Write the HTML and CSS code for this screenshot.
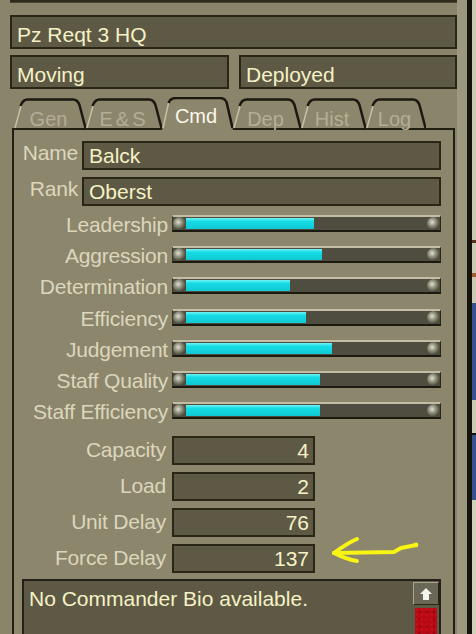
FILE: index.html
```html
<!DOCTYPE html>
<html>
<head>
<meta charset="utf-8">
<title>Unit Info</title>
<link rel="stylesheet" href="styles.css">
</head>
<body>
<div class="screen">
  <div class="app">
    <div class="stub"></div>
    <div class="field title">Pz Reqt 3 HQ</div>
    <div class="status-row">
      <div class="field status">Moving</div>
      <div class="field status status-b">Deployed</div>
    </div>

    <div class="tabs">
      <div class="tab w-gen">
        <svg width="72" height="33" viewBox="0 0 72 33"><path class="t-fill" d="M0 31 L6 9 Q8 3 14 3 L59 3 Q63 3 65 8 L72 31Z"/><path class="t-light" d="M1 31 L7 9"/><path class="t-dark" d="M6.5 9 Q8.5 2.5 14 2.5 L59 2.5 Q63.5 2.5 65.5 8 L71.5 31"/></svg>
        <span>Gen</span>
      </div>
      <div class="tab w-es">
        <svg width="76" height="33" viewBox="0 0 76 33"><path class="t-fill" d="M0 31 L6 9 Q8 3 14 3 L63 3 Q67 3 69 8 L76 31Z"/><path class="t-light" d="M1 31 L7 9"/><path class="t-dark" d="M6.5 9 Q8.5 2.5 14 2.5 L63 2.5 Q67.5 2.5 69.5 8 L75.5 31"/></svg>
        <span class="es">E&amp;S</span>
      </div>
      <div class="tab active w-cmd">
        <svg width="71" height="33" viewBox="0 0 71 33"><path class="t-fill-a" d="M0 33 L6 6 Q8 0.5 14 0.5 L58 0.5 Q62 0.5 64 5 L71 33Z"/><path class="t-light" d="M1 31 L6.5 6"/><path class="t-dark" d="M6.5 6 Q8.5 1 14 1 L58 1 Q62.5 1 64.5 5 L70.5 31"/></svg>
        <span>Cmd</span>
      </div>
      <div class="tab w-dep">
        <svg width="68" height="33" viewBox="0 0 68 33"><path class="t-fill" d="M0 31 L6 9 Q8 3 14 3 L55 3 Q59 3 61 8 L68 31Z"/><path class="t-light" d="M1 31 L7 9"/><path class="t-dark" d="M6.5 9 Q8.5 2.5 14 2.5 L55 2.5 Q59.5 2.5 61.5 8 L67.5 31"/></svg>
        <span>Dep</span>
      </div>
      <div class="tab w-hist">
        <svg width="65" height="33" viewBox="0 0 65 33"><path class="t-fill" d="M0 31 L6 9 Q8 3 14 3 L52 3 Q56 3 58 8 L65 31Z"/><path class="t-light" d="M1 31 L7 9"/><path class="t-dark" d="M6.5 9 Q8.5 2.5 14 2.5 L52 2.5 Q56.5 2.5 58.5 8 L64.5 31"/></svg>
        <span>Hist</span>
      </div>
      <div class="tab w-log">
        <svg width="60" height="33" viewBox="0 0 60 33"><path class="t-fill" d="M0 31 L6 9 Q8 3 14 3 L47 3 Q51 3 53 8 L60 31Z"/><path class="t-light" d="M1 31 L7 9"/><path class="t-dark" d="M6.5 9 Q8.5 2.5 14 2.5 L47 2.5 Q51.5 2.5 53.5 8 L59.5 31"/></svg>
        <span>Log</span>
      </div>
    </div>

    <div class="panel">
      <div class="id-row"><div class="lbl id-lbl">Name</div><div class="field idf">Balck</div></div>
      <div class="id-row"><div class="lbl id-lbl">Rank</div><div class="field idf">Oberst</div></div>

      <div class="sliders">
        <div class="srow"><div class="lbl s-lbl">Leadership</div><div class="slider"><span class="knob"></span><span class="fill" style="width:128px"></span><span class="rest"></span><span class="knob"></span></div></div>
        <div class="srow"><div class="lbl s-lbl">Aggression</div><div class="slider"><span class="knob"></span><span class="fill" style="width:136px"></span><span class="rest"></span><span class="knob"></span></div></div>
        <div class="srow"><div class="lbl s-lbl">Determination</div><div class="slider"><span class="knob"></span><span class="fill" style="width:104px"></span><span class="rest"></span><span class="knob"></span></div></div>
        <div class="srow"><div class="lbl s-lbl">Efficiency</div><div class="slider"><span class="knob"></span><span class="fill" style="width:120px"></span><span class="rest"></span><span class="knob"></span></div></div>
        <div class="srow"><div class="lbl s-lbl">Judgement</div><div class="slider"><span class="knob"></span><span class="fill" style="width:146px"></span><span class="rest"></span><span class="knob"></span></div></div>
        <div class="srow"><div class="lbl s-lbl">Staff Quality</div><div class="slider"><span class="knob"></span><span class="fill" style="width:134px"></span><span class="rest"></span><span class="knob"></span></div></div>
        <div class="srow"><div class="lbl s-lbl">Staff Efficiency</div><div class="slider"><span class="knob"></span><span class="fill" style="width:134px"></span><span class="rest"></span><span class="knob"></span></div></div>
      </div>

      <div class="numbers">
        <div class="nrow"><div class="lbl n-lbl">Capacity</div><div class="field num">4</div></div>
        <div class="nrow"><div class="lbl n-lbl">Load</div><div class="field num">2</div></div>
        <div class="nrow"><div class="lbl n-lbl">Unit Delay</div><div class="field num">76</div></div>
        <div class="nrow"><div class="lbl n-lbl">Force Delay</div><div class="field num">137</div>
          <svg class="arrow" width="92" height="32" viewBox="0 0 92 32">
            <path d="M4 18 C12 12 20 7 27 4"/>
            <path d="M4 18 C12 22 20 25 27 26"/>
            <path d="M4 18 L64 17 L71 13 L86 10"/>
            <circle cx="86" cy="10" r="2.4"/>
          </svg>
        </div>
      </div>

      <div class="bio">
        <div class="bio-text">No Commander Bio available.</div>
        <div class="scroll">
          <div class="up"><svg width="14" height="14" viewBox="0 0 14 14"><path d="M7 1 L13 7 L10 7 L10 13 L4 13 L4 7 L1 7 Z" fill="#f4f4ee"/></svg></div>
          <div class="thumb"></div>
        </div>
      </div>
    </div>
  </div>
  <div class="rim"></div>
  <div class="edge"></div>
  <div class="outside"></div>
</div>
</body>
</html>
```

FILE: styles.css
```css
html, body {
  margin: 0;
  padding: 0;
}
body {
  background: #8a846b;
  font-family: "Liberation Sans", Arial, sans-serif;
}
.screen {
  display: flex;
  width: 476px;
  height: 634px;
  overflow: hidden;
}
.app {
  width: 457px;
  flex: none;
  background: #8a846b;
}
.rim {
  width: 10px;
  flex: none;
  background: #9c977f;
}
.edge {
  width: 5px;
  flex: none;
  background: #15130c;
}
.outside {
  flex: 1;
  background: linear-gradient(to bottom,
    #cacab4 0, #cacab4 240px, #5a3020 240px, #5a3020 243px,
    #cacab4 243px, #cacab4 273px, #a85c2c 273px, #a85c2c 277px,
    #cacab4 277px, #cacab4 303px, #34528c 303px, #34528c 400px,
    #cacab4 400px, #cacab4 433px, #101010 433px, #101010 435px,
    #34528c 435px, #34528c 500px, #d0d0bc 500px);
}
.stub {
  width: 447px;
  height: 2px;
  margin-left: 10px;
  background: #2e2b1d;
  border-bottom: 1px solid #4a4632;
}

/* generic field */
.field {
  box-sizing: border-box;
  border: 2px solid #2a2616;
  background: #5e5945;
  color: #f6f2c6;
  font-size: 21px;
  white-space: nowrap;
  overflow: hidden;
}
.title {
  margin: 12px 0 0 10px;
  width: 447px;
  height: 34px;
  padding: 4px 0 0 5px;
  line-height: 27px;
}
.status-row {
  display: flex;
  gap: 10px;
  margin: 6px 0 0 10px;
  width: 447px;
}
.status {
  flex: none;
  width: 219px;
  height: 34px;
  padding: 4px 0 0 5px;
  line-height: 27px;
}
.status-b {
  width: 218px;
}

/* tabs */
.tabs {
  display: flex;
  height: 33px;
  margin: 8px 0 -2px 14px;
  position: relative;
  z-index: 1;
}
.tab {
  position: relative;
  flex: none;
  height: 33px;
  display: flex;
  align-items: flex-end;
  justify-content: center;
  padding-right: 3px;
  box-sizing: border-box;
}
.tab svg {
  position: absolute;
  left: 0;
  top: 0;
}
.tab span {
  position: relative;
  font-size: 20px;
  line-height: 20px;
  color: #b3ae95;
  padding-bottom: 1px;
}
.tab span.es {
  letter-spacing: 3px;
  padding-left: 3px;
}
.tab.active span {
  color: #fbf8ea;
  padding-bottom: 4px;
}
.w-gen { width: 72px; }
.w-es { width: 76px; }
.w-cmd { width: 71px; }
.w-dep { width: 68px; }
.w-hist { width: 65px; }
.w-log { width: 60px; }
.t-fill { fill: #8c866d; }
.t-fill-a { fill: #8c866d; }
.t-light { fill: none; stroke: #c6c1a6; stroke-width: 1.5; }
.t-dark { fill: none; stroke: #1a1810; stroke-width: 2.5; }

/* panel */
.panel {
  position: relative;
  margin-left: 12px;
  width: 443px;
  height: 506px;
  box-sizing: border-box;
  border: 2px solid #211e14;
  border-bottom: none;
  background: #8c866d;
  padding: 11px 12px 0 0;
}
.lbl {
  color: #dcd6bc;
  font-size: 21px;
  letter-spacing: -0.2px;
  white-space: nowrap;
  text-align: right;
  flex: none;
}
.id-row {
  display: flex;
  gap: 4px;
  height: 29px;
}
.id-row + .id-row {
  margin-top: 7px;
}
.id-lbl {
  width: 64px;
  line-height: 24px;
}
.idf {
  flex: 1;
  line-height: 25px;
  padding-left: 5px;
}

.sliders {
  margin-top: 2px;
}
.srow {
  display: flex;
  align-items: center;
  gap: 4px;
  height: 31.2px;
}
.s-lbl {
  width: 154px;
  padding-top: 2px;
  line-height: 29px;
}
.slider {
  flex: none;
  width: 269px;
  height: 17px;
  box-sizing: border-box;
  border-top: 2px solid #c2bda4;
  border-bottom: 2px solid #1c1a10;
  border-left: 1px solid #3a3728;
  border-right: 1px solid #2a2618;
  background: #4f4c40;
  display: flex;
  align-items: center;
}
.knob {
  flex: none;
  width: 13px;
  height: 13px;
  border-radius: 50%;
  background: radial-gradient(circle at 40% 40%, #e2e2d2 0, #8e8e7c 35%, #3a3a2c 78%);
}
.fill {
  flex: none;
  height: 11px;
  background: linear-gradient(#70f4f4, #16dce5 30%, #10c8d4);
}
.rest {
  flex: 1;
}

.numbers {
  margin-top: 10px;
}
.nrow {
  display: flex;
  align-items: flex-start;
  gap: 6px;
  height: 29px;
}
.nrow + .nrow {
  margin-top: 7px;
}
.n-lbl {
  width: 152px;
  line-height: 28px;
}
.num {
  flex: none;
  width: 143px;
  height: 29px;
  text-align: right;
  padding-right: 4px;
  line-height: 25px;
}
.arrow {
  flex: none;
  margin: -9px 0 0 9px;
}
.arrow path {
  fill: none;
  stroke: #f8f414;
  stroke-width: 4;
  stroke-linecap: round;
  stroke-linejoin: round;
}
.arrow circle {
  fill: #f8f414;
}

.bio {
  display: flex;
  margin: 6px 0 0 8px;
  width: 419px;
  height: 80px;
  box-sizing: border-box;
  border: 2px solid #24201a;
  background: #5e5945;
}
.bio-text {
  flex: 1;
  color: #f6f2c6;
  font-size: 21px;
  padding: 5px 0 0 5px;
  line-height: 26px;
  white-space: nowrap;
}
.scroll {
  flex: none;
  width: 26px;
  margin-top: 1px;
  display: flex;
  flex-direction: column;
  gap: 3px;
}
.up {
  height: 23px;
  box-sizing: border-box;
  background: #6b6757;
  border: 1px solid;
  border-color: #aaa692 #2a2618 #2a2618 #aaa692;
  display: flex;
  align-items: center;
  justify-content: center;
}
.thumb {
  flex: 1;
  margin: 0 2px;
  background: #b80a14;
  background-image: radial-gradient(circle at 30% 30%, #d01020 0, transparent 2px),
                    radial-gradient(circle at 70% 60%, #8a0610 0, transparent 2px);
  background-size: 5px 5px, 7px 7px;
}
```
